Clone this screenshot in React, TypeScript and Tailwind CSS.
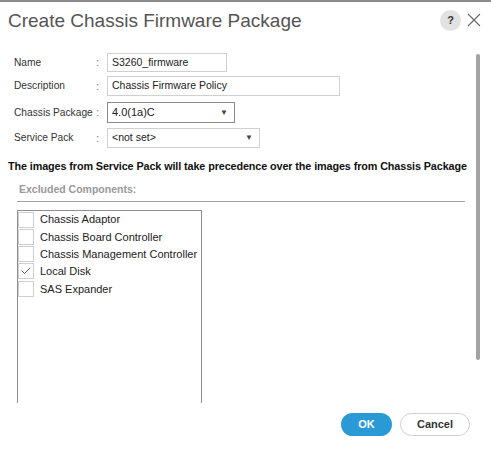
import { Check } from 'lucide-react'

const font = { fontFamily: '"Liberation Sans", Arial, sans-serif' }

const components = [
  { name: 'Chassis Adaptor', checked: false },
  { name: 'Chassis Board Controller', checked: false },
  { name: 'Chassis Management Controller', checked: false },
  { name: 'Local Disk', checked: true },
  { name: 'SAS Expander', checked: false },
]

function Row({ label, top, children }: { label: string; top: string; children: React.ReactNode }) {
  return (
    <div className={`flex items-center ${top}`}>
      <span className="w-[82px] whitespace-nowrap text-[10.2px] text-[#333]">{label}</span>
      <span className="w-[11px] text-[11px] text-[#777]">:</span>
      {children}
    </div>
  )
}

function Caret() {
  return <span className="text-[8px] text-[#444]">▼</span>
}

export default function App() {
  return (
    <div className="relative w-[491px] h-[452px] bg-white border-t-2 border-[#8c8c8c] overflow-hidden" style={font}>
      {/* header */}
      <div className="flex items-center h-[36px] pl-[8px] pr-[9px]">
        <h1 className="flex-1 text-[19px] leading-none text-[#555]">Create Chassis Firmware Package</h1>
        <div className="flex items-center justify-center w-[21px] h-[21px] rounded-full bg-[#e2e2e2] text-[11px] font-bold text-[#333]">?</div>
        <svg className="ml-[5px]" width="16" height="16" viewBox="0 0 16 16">
          <path d="M2 2 L14 14 M14 2 L2 14" stroke="#666" strokeWidth="1.1" fill="none" />
        </svg>
      </div>

      {/* form */}
      <div className="pl-[14px]">
        <Row label="Name" top="mt-[15px]">
          <div className="w-[120px] h-[19px] border border-[#d0d0d0] px-[4px] flex items-center text-[10.5px] text-[#222]">S3260_firmware</div>
        </Row>
        <Row label="Description" top="mt-[4px]">
          <div className="w-[233px] h-[20px] border border-[#d0d0d0] px-[4px] flex items-center text-[10.5px] text-[#222]">Chassis Firmware Policy</div>
        </Row>
        <Row label="Chassis Package" top="mt-[6px]">
          <div className="w-[128px] h-[21px] border border-[#8a8a8a] pl-[4px] pr-[6px] flex items-center justify-between text-[11px] text-[#222]">
            <span>4.0(1a)C</span>
            <Caret />
          </div>
        </Row>
        <Row label="Service Pack" top="mt-[5px]">
          <div className="w-[153px] h-[20px] border border-[#d0d0d0] pl-[4px] pr-[6px] flex items-center justify-between text-[10.5px] text-[#222]">
            <span>&lt;not set&gt;</span>
            <Caret />
          </div>
        </Row>
      </div>

      <p className="mt-[10px] pl-[8px] whitespace-nowrap text-[10.8px] font-bold text-[#111] tracking-[-0.1px]">
        The images from Service Pack will take precedence over the images from Chassis Package
      </p>

      <div className="ml-[17px] mr-[26px] mt-[8px] pl-[2px] pb-[3px] border-b border-[#a0a0a0] text-[10.5px] font-bold text-[#999]">
        Excluded Components:
      </div>

      {/* component list */}
      <div className="ml-[17px] mt-[8px] w-[185px] h-[193px] border-x border-t border-[#8f8f8f]">
        {components.map((c) => (
          <div key={c.name} className="flex items-center h-[17.3px]">
            <div className="w-[16px] h-[16px] border border-[#cfcfcf] flex items-center justify-center">
              {c.checked && <Check size={12} strokeWidth={1.6} color="#333" />}
            </div>
            <span className="ml-[6px] text-[11px] text-[#222]">{c.name}</span>
          </div>
        ))}
      </div>

      {/* scrollbar */}
      <div className="absolute left-[476px] top-[52px] w-[4px] h-[306px] rounded-full bg-[#a3a3a3]" />

      {/* actions */}
      <div className="absolute left-[341px] top-[411px] flex gap-[8px]">
        <button className="w-[51px] h-[23px] rounded-full bg-[#2a9ad6] text-white text-[11px] font-bold">OK</button>
        <button className="w-[70px] h-[23px] rounded-full border border-[#cfcfcf] bg-white text-[#333] text-[11px] font-bold">Cancel</button>
      </div>
    </div>
  )
}
